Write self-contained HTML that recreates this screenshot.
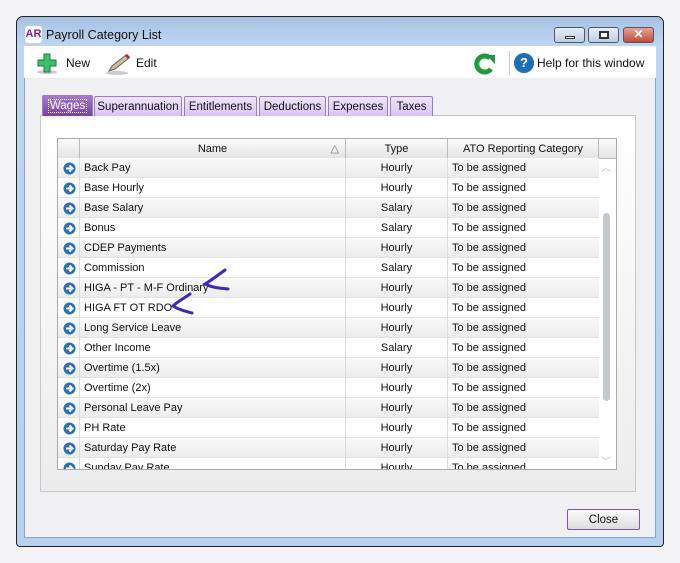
<!DOCTYPE html>
<html><head><style>
*{box-sizing:border-box;margin:0;padding:0}
body{width:680px;height:563px;background:#f4f4f6;font-family:"Liberation Sans",sans-serif;font-size:11px;color:#111;position:relative;overflow:hidden}
.abs{position:absolute}
.win{left:16px;top:16px;width:648px;height:531px;border:1px solid #222;border-radius:7px 7px 4px 4px;background:linear-gradient(#a6c2e4,#c0d6f0 30px,#b6d0ee);}
.client{left:24px;top:46px;width:632px;height:492px;background:#f0f0f2;border:1px solid #8ea6c6}
.tb{left:24px;top:46px;width:632px;height:32px;background:#fff}
.tab{top:96px;height:20px;border:1px solid #9b7cc4;border-bottom:none;background:linear-gradient(#efe4fb,#d9c4f2);font-size:11.5px;text-align:center;line-height:20px;border-radius:2px 2px 0 0}
.panel{left:40px;top:115px;width:596px;height:377px;background:linear-gradient(#fff,#f4f4f4 60%,#ececec);border:1px solid #c8c8c8}
.grid{left:57px;top:138px;width:560px;height:332px;border:1px solid #aaa;background:#fff;overflow:hidden}
.row{position:absolute;left:0;width:541px;height:20px;border-bottom:1px solid #e3e3e3}
.row.g{background:linear-gradient(#fafafa,#ececec)}
.row div{position:absolute;top:0;height:20px;line-height:21px;font-size:11px}
.c1{left:0;width:22px;border-right:1px solid #ddd}
.c2{left:22px;width:266px;padding-left:4px;border-right:1px solid #ddd}
.c3{left:288px;width:102px;text-align:center;border-right:1px solid #ddd}
.c4{left:390px;width:151px;padding-left:4px}
.ic{position:absolute;left:5px;top:4px}
.hd{position:absolute;top:0;height:20px;background:linear-gradient(#fbfbfb,#e4e4e4);border-right:1px solid #bbb;border-bottom:1px solid #bbb;text-align:center;line-height:21px;font-size:11px}
.btn{width:19px;height:16px;top:27px;border:1px solid #556;border-radius:3px;background:linear-gradient(#e6eef8,#bccde2)}
</style></head><body>
<div class="abs win"></div>
<div class="abs" style="left:25px;top:26px;width:17px;height:17px;background:#fff;border-radius:3px;color:#8a1aa0;font-weight:bold;font-size:11px;line-height:17px;text-align:center">AR</div>
<div class="abs" style="left:46px;top:28px;font-size:12.5px">Payroll Category List</div>
<div class="abs btn" style="left:554px;width:31px"><div style="position:absolute;left:10px;top:8px;width:10px;height:3px;background:#fff;border:1px solid #333"></div></div>
<div class="abs btn" style="left:588px;width:31px"><div style="position:absolute;left:10px;top:3px;width:10px;height:8px;border:2px solid #333;background:#fff"></div></div>
<div class="abs btn" style="left:623px;width:31px;background:linear-gradient(#e8a294,#c24b35);color:#fff;font-weight:bold;text-align:center;line-height:13px;font-size:12px">✕</div>
<div class="abs client"></div>
<div class="abs tb"></div>
<svg class="abs" style="left:36px;top:52px" width="24" height="24"><ellipse cx="11" cy="20" rx="10" ry="2" fill="#ccc"/><path d="M8 2h6v6h6v6h-6v6H8v-6H2V8h6z" fill="#3cc068" stroke="#1b7a3a" stroke-width="1"/></svg>
<div class="abs" style="left:66px;top:56px;font-size:12px">New</div>
<svg class="abs" style="left:105px;top:52px" width="26" height="24"><ellipse cx="12" cy="21" rx="11" ry="2" fill="#ccc"/><path d="M4 19 L7 14 L21 3 L24 6 L10 17 Z" fill="#c8c0a8" stroke="#6a6250" stroke-width="1"/><path d="M21 3 L24 6" stroke="#c02030" stroke-width="3"/></svg>
<div class="abs" style="left:136px;top:56px;font-size:12px">Edit</div>
<svg class="abs" style="left:473px;top:51px" width="26" height="26"><path d="M17 7 A8 8 0 1 0 18 18" fill="none" stroke="#1e9b3a" stroke-width="5"/><path d="M13 4 L22 4 L22 13 Z" fill="#1e9b3a"/></svg>
<div class="abs" style="left:509px;top:51px;width:1px;height:24px;background:#ccc"></div>
<div class="abs" style="left:514px;top:53px;width:20px;height:20px;border-radius:50%;background:#1f6fb3;color:#fff;font-weight:bold;text-align:center;line-height:20px;font-size:13px">?</div>
<div class="abs" style="left:537px;top:56px;font-size:12px">Help for this window</div>
<div class="abs panel"></div>
<div class="abs tab" style="left:42px;width:51px;background:linear-gradient(#a779cc,#7a3fa7);color:#fff;top:95px;height:21px"><span style="border:1px dotted #fff;padding:0 1px">Wages</span></div>
<div class="abs tab" style="left:94px;width:88px">Superannuation</div>
<div class="abs tab" style="left:184px;width:73px">Entitlements</div>
<div class="abs tab" style="left:259px;width:67px">Deductions</div>
<div class="abs tab" style="left:328px;width:60px">Expenses</div>
<div class="abs tab" style="left:390px;width:43px">Taxes</div>
<div class="abs grid">
<div class="hd" style="left:0;width:22px"></div>
<div class="hd" style="left:22px;width:266px">Name<span style="position:absolute;right:6px;color:#777">△</span></div>
<div class="hd" style="left:288px;width:102px">Type</div>
<div class="hd" style="left:390px;width:151px">ATO Reporting Category</div>
<div class="hd" style="left:541px;width:19px"></div>
<div id="rows"></div>
<div style="position:absolute;left:541px;top:20px;width:18px;height:312px;background:#fff"></div>
<div style="position:absolute;left:545px;top:74px;width:7px;height:188px;border-radius:4px;background:#c4c8cf"></div>
<div style="position:absolute;left:543px;top:20px;color:#bbb;font-size:10px">︿</div>
<div style="position:absolute;left:543px;top:314px;color:#bbb;font-size:10px">﹀</div>
</div>
<div class="abs" style="left:567px;top:509px;width:73px;height:21px;border:1px solid #7a5aa0;border-radius:2px;background:linear-gradient(#fbfbfb,#dcdcdc);text-align:center;line-height:20px;font-size:11.5px">Close</div>
<svg class="abs" style="left:165px;top:266px" width="70" height="52"><path d="M60 4 C52 10 45 15 40 18 C48 22 55 22 63 23" fill="none" stroke="#3b2bb8" stroke-width="3" stroke-linecap="round"/><path d="M25 28 C18 33 12 36 8 40 C14 44 20 45 27 47" fill="none" stroke="#3b2bb8" stroke-width="3" stroke-linecap="round"/></svg>
<script>
var d=[["Back Pay","Hourly"],["Base Hourly","Hourly"],["Base Salary","Salary"],["Bonus","Salary"],["CDEP Payments","Hourly"],["Commission","Salary"],["HIGA - PT - M-F Ordinary","Hourly"],["HIGA FT OT RDO","Hourly"],["Long Service Leave","Hourly"],["Other Income","Salary"],["Overtime (1.5x)","Hourly"],["Overtime (2x)","Hourly"],["Personal Leave Pay","Hourly"],["PH Rate","Hourly"],["Saturday Pay Rate","Hourly"],["Sunday Pay Rate","Hourly"]];
var ic='<svg class="ic" width="13" height="13"><circle cx="6.5" cy="6.5" r="6" fill="#2a6fb7"/><path d="M3 6.5h6M6.5 3.5l3 3-3 3" fill="none" stroke="#fff" stroke-width="2"/></svg>';
var h="";d.forEach(function(r,i){h+='<div class="row'+(i%2==0?' g':'')+'" style="top:'+(19+i*20)+'px"><div class="c1">'+ic+'</div><div class="c2">'+r[0]+'</div><div class="c3">'+r[1]+'</div><div class="c4">To be assigned</div></div>';});
document.getElementById("rows").innerHTML=h;
</script>
</body></html>
